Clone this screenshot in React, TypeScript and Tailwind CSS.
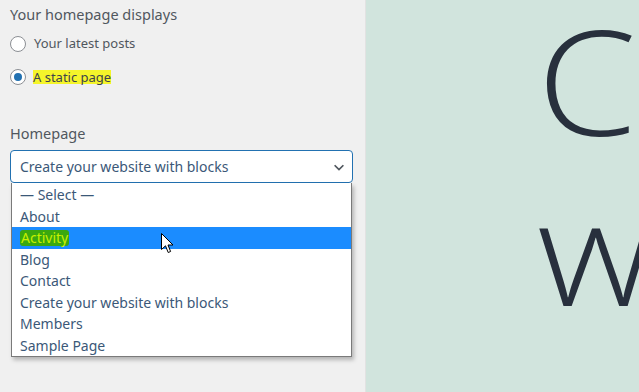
import React from "react";

const items = [
  "— Select —",
  "About",
  "Activity",
  "Blog",
  "Contact",
  "Create your website with blocks",
  "Members",
  "Sample Page",
];

function Radio({ checked }: { checked?: boolean }) {
  return (
    <span className="flex h-[16px] w-[16px] items-center justify-center rounded-full border border-[#8c8f94] bg-white">
      {checked && <span className="h-[8px] w-[8px] rounded-full bg-[#2271b1]" />}
    </span>
  );
}

export default function App() {
  return (
    <div
      className="flex h-[392px] w-[639px] overflow-hidden bg-[#f0f0f1]"
      style={{ fontFamily: '"Noto Sans", "Open Sans", sans-serif' }}
    >
      <div className="relative w-[366px] shrink-0 border-r border-[#e2e2e2] bg-[#f0f0f0] pl-[10px] pr-[12px] text-[13px]">
        <div className="pt-[3px] text-[14.5px] leading-[22px] text-[#50575e]">Your homepage displays</div>
        <div className="mt-[8px] flex h-[22px] items-center gap-[8px] text-[#50575e]">
          <Radio />
          <span>Your latest posts</span>
        </div>
        <div className="mt-[11px] flex h-[22px] items-center gap-[7px] text-[#3c434a]">
          <Radio checked />
          <span className="bg-[#f5f52a] leading-[14px]">A static page</span>
        </div>
        <div className="mt-[34px] text-[14.5px] leading-[22px] text-[#50575e]">Homepage</div>
        <div className="mt-[6px] flex h-[33px] items-center justify-between rounded-[4px] border border-[#2271b1] bg-white pl-[9px] pr-[6px] text-[14px] text-[#3b5878]">
          <span>Create your website with blocks</span>
          <svg width="14" height="14" viewBox="0 0 16 16" fill="none">
            <path d="M3 6l5 5 5-5" stroke="#50575e" strokeWidth="2" />
          </svg>
        </div>
        <div className="ml-[1px] mr-[1px] border border-t-0 border-[#7a7a7a] bg-white pt-px shadow-[2px_3px_4px_rgba(0,0,0,0.25)]">
          {items.map((it) => (
            <div
              key={it}
              className={
                "flex h-[21.5px] items-center pl-[8px] text-[14px] " +
                (it === "Activity" ? "bg-[#1b8cff] text-[#c8f000]" : "text-[#3b5878]")
              }
            >
              {it === "Activity" ? (
                <span className="rounded-[3px] bg-[#3aa80f] px-[1px] leading-[16px]">Activity</span>
              ) : (
                it
              )}
            </div>
          ))}
        </div>
        <svg
          className="absolute left-[161px] top-[233px]"
          width="13"
          height="21"
          viewBox="0 0 13 21"
        >
          <path
            d="M0.5 0.5 L0.5 16.5 L4.5 12.8 L7.2 19.5 L9.6 18.5 L7 12 L12 12 Z"
            fill="white"
            stroke="black"
            strokeWidth="1"
            strokeLinejoin="round"
          />
        </svg>
      </div>
      <div className="flex-1 overflow-hidden bg-[#d1e4dd] pl-[171px]">
        <div
          className="origin-left scale-x-[1.1] whitespace-nowrap text-[146px] font-[300] leading-[170px] text-[#28303d]"
          style={{ fontFamily: '"Open Sans", sans-serif', marginTop: "-5px" }}
        >
          <div>C</div>
          <div>w</div>
        </div>
      </div>
    </div>
  );
}
